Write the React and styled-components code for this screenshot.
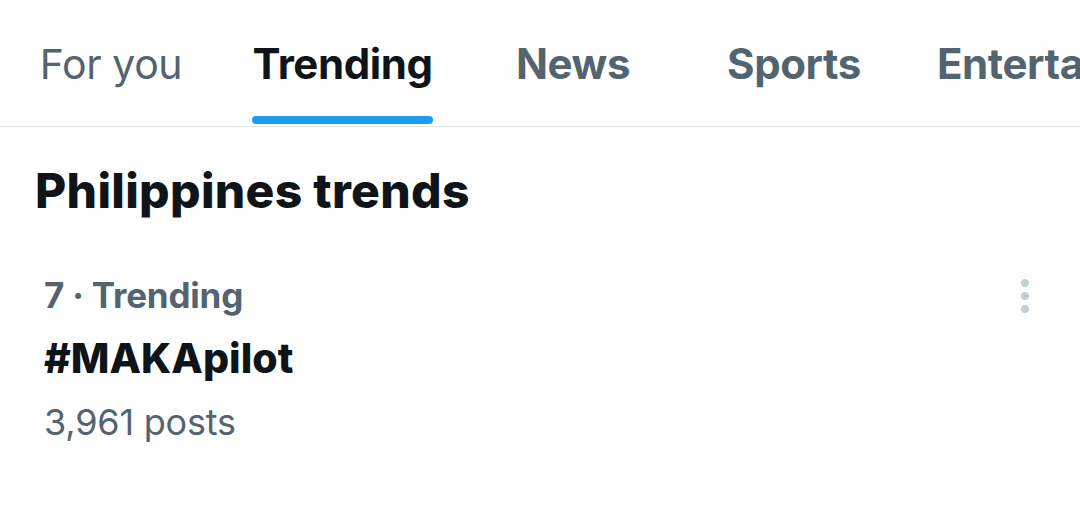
import React from "react";
import styled, { createGlobalStyle } from "styled-components";

const GlobalStyle = createGlobalStyle`
  html, body {
    margin: 0;
    padding: 0;
    background: #ffffff;
    font-family: Inter, "Noto Sans", "Liberation Sans", sans-serif;
    -webkit-font-smoothing: antialiased;
  }
`;

const Page = styled.div`
  width: 1080px;
  height: 524px;
  overflow: hidden;
  background: #ffffff;
`;

const TabBar = styled.nav`
  display: flex;
  height: 126px;
  border-bottom: 1px solid #dfe4e6;
  white-space: nowrap;
  overflow: hidden;
`;

const Tab = styled.div`
  flex: none;
  display: flex;
  justify-content: ${(p) => (p.$width ? "center" : "flex-start")};
  width: ${(p) => (p.$width ? `${p.$width}px` : "auto")};
  padding: ${(p) => (p.$width ? "0" : "0 32px")};
`;

const TabInner = styled.div`
  display: flex;
  flex-direction: column;
  padding: 39px 0 2px;
`;

const TabLabel = styled.span`
  font-size: ${(p) => (p.$light ? 41 : 42)}px;
  line-height: 50px;
  font-weight: ${(p) => (p.$light ? 400 : 700)};
  color: ${(p) => (p.$active ? "#0f1419" : "#536471")};
  letter-spacing: -0.4px;
`;

const Indicator = styled.span`
  margin-top: 27px;
  height: 8px;
  border-radius: 4px;
  background: ${(p) => (p.$active ? "#1d9bf0" : "transparent")};
`;

const Heading = styled.h2`
  margin: 0;
  padding: 36px 0 0 35px;
  font-size: 48px;
  font-weight: 800;
  color: #0f1419;
  letter-spacing: 0.3px;
  line-height: 56px;
`;

const TrendRow = styled.div`
  display: flex;
  justify-content: space-between;
  align-items: flex-start;
  padding: 53px 47px 0 44px;
`;

const TrendInfo = styled.div`
  display: flex;
  flex-direction: column;
`;

const Meta = styled.div`
  font-size: 35px;
  font-weight: 700;
  color: #536471;
  line-height: 46px;
  letter-spacing: -0.2px;
`;

const TrendName = styled.div`
  margin-top: 9px;
  font-size: 41px;
  font-weight: 800;
  color: #0f1419;
  line-height: 62px;
  letter-spacing: 0;
`;

const Count = styled.div`
  margin-top: 9px;
  font-size: 36px;
  font-weight: 400;
  color: #536471;
  line-height: 48px;
  letter-spacing: -0.2px;
`;

const MoreButton = styled.button`
  border: none;
  background: none;
  padding: 0;
  margin-top: 5px;
  display: flex;
  cursor: pointer;
`;

const tabs = [
  { label: "For you", width: 222, light: true },
  { label: "Trending", width: 241, active: true },
  { label: "News", width: 220 },
  { label: "Sports", width: 222 },
  { label: "Entertainment" },
];

export default function App() {
  return (
    <Page>
      <GlobalStyle />
      <TabBar>
        {tabs.map((t) => (
          <Tab key={t.label} $width={t.width}>
            <TabInner>
              <TabLabel $active={t.active} $light={t.light}>
                {t.label}
              </TabLabel>
              <Indicator $active={t.active} />
            </TabInner>
          </Tab>
        ))}
      </TabBar>
      <Heading>Philippines trends</Heading>
      <TrendRow>
        <TrendInfo>
          <Meta>7 · Trending</Meta>
          <TrendName>#MAKApilot</TrendName>
          <Count>3,961 posts</Count>
        </TrendInfo>
        <MoreButton aria-label="More">
          <svg width="16" height="40" viewBox="0 0 16 40">
            <circle cx="8" cy="6" r="4" fill="#c4cfd6" />
            <circle cx="8" cy="19" r="4" fill="#c4cfd6" />
            <circle cx="8" cy="32" r="4" fill="#c4cfd6" />
          </svg>
        </MoreButton>
      </TrendRow>
    </Page>
  );
}
